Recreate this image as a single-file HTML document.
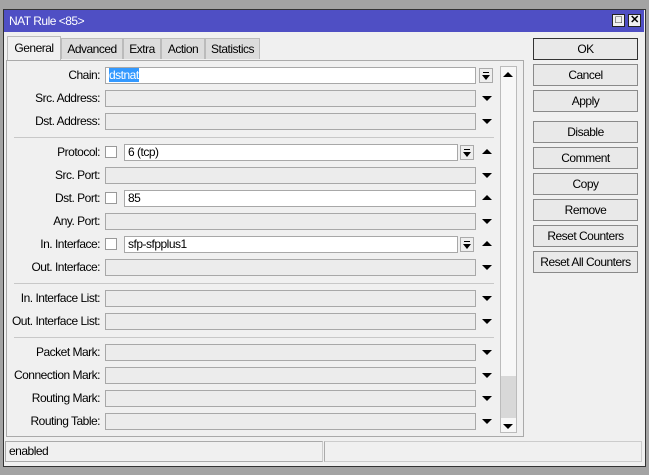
<!DOCTYPE html><html><head><style>
body{margin:0;width:649px;height:475px;background:#a3a3a3;position:relative;overflow:hidden;font-family:"Liberation Sans",sans-serif;font-size:12px;color:#000;letter-spacing:-0.5px}
.a{position:absolute}
.win{left:3px;top:9px;width:641px;height:456px;background:#f0f0f0;border:1px solid #333}
.title{left:4px;top:10px;width:640px;height:22px;background:#4f4fc4;color:#fff;font-size:12px;line-height:22px;padding-left:5px;box-sizing:border-box}
.tb{width:13px;height:13px;top:14px;background:#f0f0f0;border:1px solid #222;box-sizing:border-box;font-size:11px;line-height:11px;text-align:center;font-weight:bold}
.tab{top:38px;height:21px;line-height:21px;background:#dcdcdc;border:1px solid #bbb;border-bottom:none;text-align:center;box-sizing:border-box}
.panel{left:6px;top:60px;width:518px;height:377px;border:1px solid #aaa;background:#f0f0f0;box-sizing:border-box}
.lb{width:98px;text-align:right;left:2px;height:17px;line-height:17px}
.in{height:17px;border:1px solid #a8a8a8;background:#ececec;box-sizing:border-box;line-height:15px;padding-left:3px}
.w{background:#fff}
.cb{width:12px;height:12px;border:1px solid #999;background:#fff;box-sizing:border-box}
.dn{width:0;height:0;border-left:5px solid transparent;border-right:5px solid transparent;border-top:5px solid #000}
.up{width:0;height:0;border-left:5px solid transparent;border-right:5px solid transparent;border-bottom:5px solid #000}
.dd{width:14px;height:15px;border:1px solid #aaa;background:#eee;box-sizing:border-box}
.dd:before{content:"";position:absolute;left:3px;top:3px;width:6px;height:1px;background:#000}
.dd:after{content:"";position:absolute;left:2px;top:6px;border-left:4px solid transparent;border-right:4px solid transparent;border-top:5px solid #000}
.sep{left:14px;width:480px;height:1px;background:#c8c8c8}
.btn{left:533px;width:105px;height:22px;border:1px solid #8a8a8a;background:#e9e9e9;box-sizing:border-box;text-align:center;line-height:20px}
</style></head><body>
<div class="a win"></div>
<div class="a title">NAT Rule &lt;85&gt;</div>
<div class="a tb" style="left:612px">□</div>
<div class="a tb" style="left:628px">✕</div>
<div class="a tab" style="left:7px;width:54px;background:#f0f0f0;top:36px;height:25px;line-height:23px">General</div>
<div class="a tab" style="left:61px;width:62px">Advanced</div>
<div class="a tab" style="left:123px;width:38px">Extra</div>
<div class="a tab" style="left:161px;width:44px">Action</div>
<div class="a tab" style="left:205px;width:55px">Statistics</div>
<div class="a panel"></div>
<div class="a" style="left:500px;top:66px;width:17px;height:367px;border:1px solid #bbb;background:#f7f7f7;box-sizing:border-box"></div>
<div class="a" style="left:501px;top:376px;width:15px;height:42px;background:#d8d8d8"></div>
<div class="a up" style="left:503px;top:72px"></div>
<div class="a dn" style="left:503px;top:424px"></div>

<div class="a lb" style="top:67px">Chain:</div><div class="a in w" style="left:105px;top:67px;width:371px"><span style="background:#3399ff;color:#fff">dstnat</span></div><div class="a dd" style="left:479px;top:68px"></div>
<div class="a lb" style="top:90px">Src. Address:</div><div class="a in" style="left:105px;top:90px;width:371px"></div><div class="a dn" style="left:482px;top:96px"></div>
<div class="a lb" style="top:113px">Dst. Address:</div><div class="a in" style="left:105px;top:113px;width:371px"></div><div class="a dn" style="left:482px;top:119px"></div>
<div class="a sep" style="top:137px"></div>
<div class="a lb" style="top:144px">Protocol:</div><div class="a cb" style="left:105px;top:146px"></div><div class="a in w" style="left:124px;top:144px;width:334px">6 (tcp)</div><div class="a dd" style="left:460px;top:145px"></div><div class="a up" style="left:482px;top:149px"></div>
<div class="a lb" style="top:167px">Src. Port:</div><div class="a in" style="left:105px;top:167px;width:371px"></div><div class="a dn" style="left:482px;top:173px"></div>
<div class="a lb" style="top:190px">Dst. Port:</div><div class="a cb" style="left:105px;top:192px"></div><div class="a in w" style="left:124px;top:190px;width:352px">85</div><div class="a up" style="left:482px;top:195px"></div>
<div class="a lb" style="top:213px">Any. Port:</div><div class="a in" style="left:105px;top:213px;width:371px"></div><div class="a dn" style="left:482px;top:219px"></div>
<div class="a lb" style="top:236px">In. Interface:</div><div class="a cb" style="left:105px;top:238px"></div><div class="a in w" style="left:124px;top:236px;width:334px">sfp-sfpplus1</div><div class="a dd" style="left:460px;top:237px"></div><div class="a up" style="left:482px;top:241px"></div>
<div class="a lb" style="top:259px">Out. Interface:</div><div class="a in" style="left:105px;top:259px;width:371px"></div><div class="a dn" style="left:482px;top:265px"></div>
<div class="a sep" style="top:283px"></div>
<div class="a lb" style="top:290px">In. Interface List:</div><div class="a in" style="left:105px;top:290px;width:371px"></div><div class="a dn" style="left:482px;top:296px"></div>
<div class="a lb" style="top:313px">Out. Interface List:</div><div class="a in" style="left:105px;top:313px;width:371px"></div><div class="a dn" style="left:482px;top:319px"></div>
<div class="a sep" style="top:337px"></div>
<div class="a lb" style="top:344px">Packet Mark:</div><div class="a in" style="left:105px;top:344px;width:371px"></div><div class="a dn" style="left:482px;top:350px"></div>
<div class="a lb" style="top:367px">Connection Mark:</div><div class="a in" style="left:105px;top:367px;width:371px"></div><div class="a dn" style="left:482px;top:373px"></div>
<div class="a lb" style="top:390px">Routing Mark:</div><div class="a in" style="left:105px;top:390px;width:371px"></div><div class="a dn" style="left:482px;top:396px"></div>
<div class="a lb" style="top:413px">Routing Table:</div><div class="a in" style="left:105px;top:413px;width:371px"></div><div class="a dn" style="left:482px;top:419px"></div>

<div class="a btn" style="top:38px;border-color:#333">OK</div>
<div class="a btn" style="top:64px">Cancel</div>
<div class="a btn" style="top:90px">Apply</div>
<div class="a btn" style="top:121px">Disable</div>
<div class="a btn" style="top:147px">Comment</div>
<div class="a btn" style="top:173px">Copy</div>
<div class="a btn" style="top:199px">Remove</div>
<div class="a btn" style="top:225px">Reset Counters</div>
<div class="a btn" style="top:251px">Reset All Counters</div>

<div class="a" style="left:5px;top:441px;width:318px;height:21px;border:1px solid #aaa;border-right-color:#ccc;box-sizing:border-box;line-height:19px;padding-left:3px">enabled</div>
<div class="a" style="left:324px;top:441px;width:318px;height:21px;border:1px solid #ccc;border-left-color:#aaa;box-sizing:border-box"></div>
</body></html>
